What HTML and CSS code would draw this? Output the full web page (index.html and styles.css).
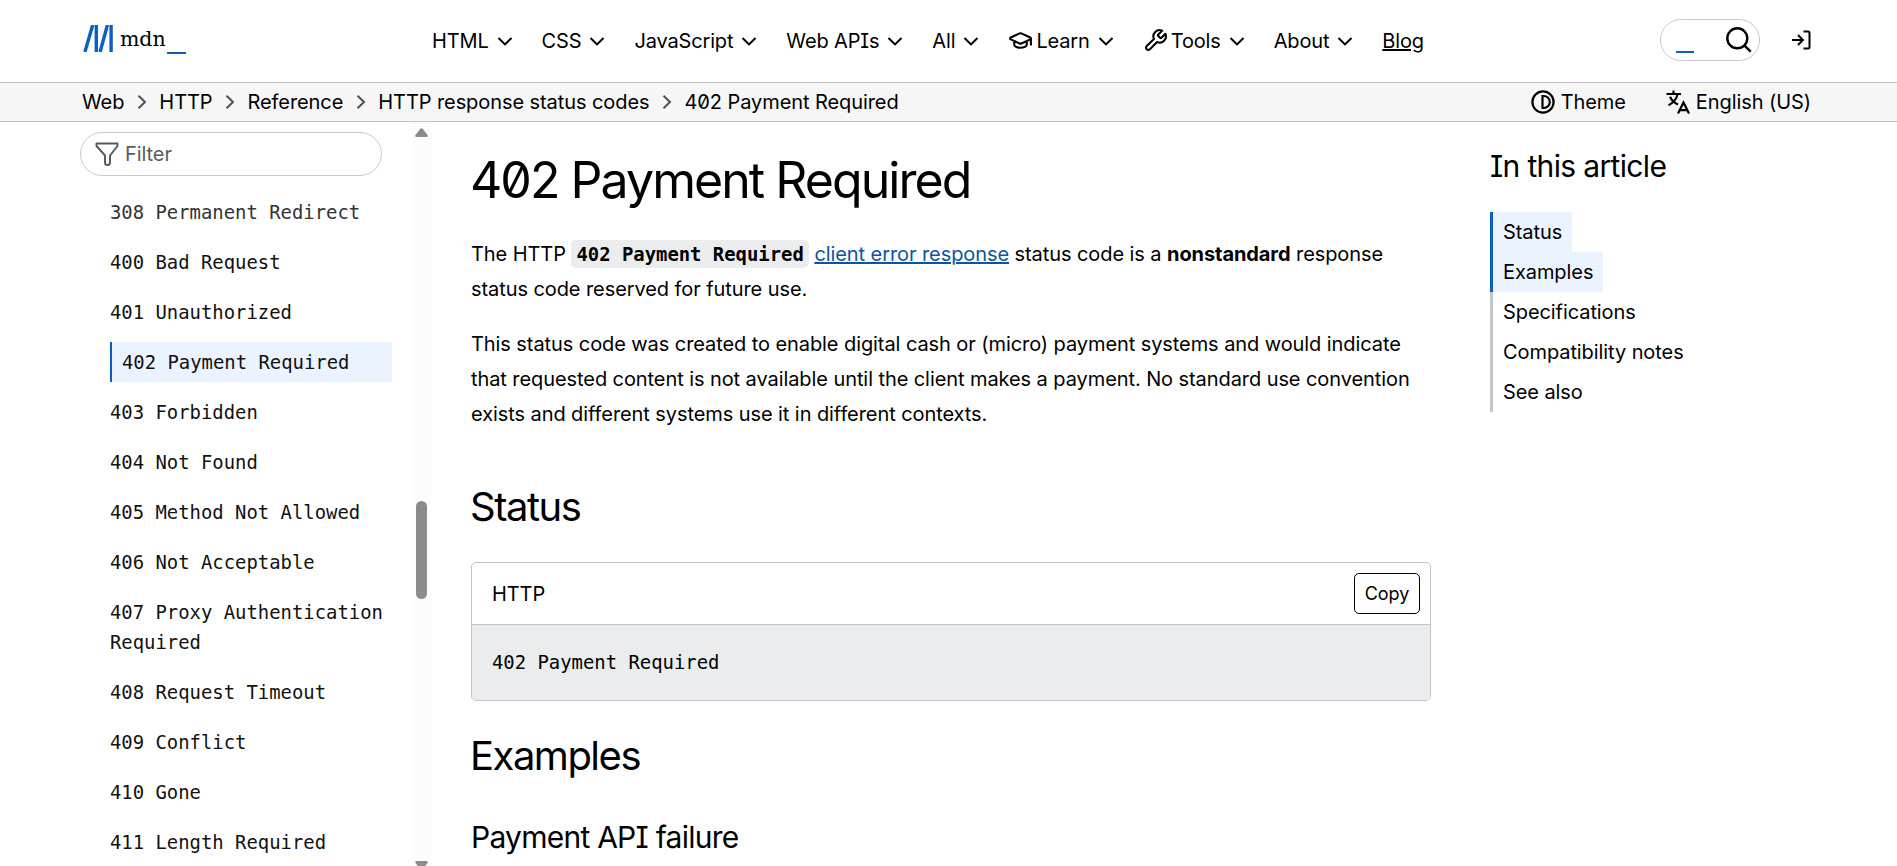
FILE: index.html
```
<!DOCTYPE html>
<html lang="en-US">
<head>
    <meta charset="UTF-8">
    <meta name="viewport" content="width=device-width, initial-scale=1.0">
    <title>402 Payment Required - HTTP | MDN</title>
    <link rel="stylesheet" href="styles.css">
</head>
<body>
    <svg class="sprite" width="0" height="0">
        <symbol id="down" viewBox="0 0 20 20"><path d="M3.5 7 10 13.4 16.5 7"/></symbol>
        <symbol id="right" viewBox="0 0 20 20"><path d="M6.5 3.8 13 10 6.5 16.2"/></symbol>
    </svg>

    <header class="header">
        <a class="logo">
            <svg class="logo-mark" viewBox="0 0 30 27">
                <path d="M1.900 27 9.700 0M13.300 0V27M17.100 27 24.400 0M28.100 0V27"/>
            </svg>
            <span class="logo-text">mdn</span>
            <span class="logo-line"></span>
        </a>
        <nav class="menu">
            <a>HTML <svg class="icon"><use href="#down"/></svg></a>
            <a>CSS <svg class="icon"><use href="#down"/></svg></a>
            <a>JavaScript <svg class="icon"><use href="#down"/></svg></a>
            <a>Web APIs <svg class="icon"><use href="#down"/></svg></a>
            <a>All <svg class="icon"><use href="#down"/></svg></a>
            <a>
                <svg class="menu-icon" viewBox="0 0 24 24">
                    <path d="M21.42 10.92a1 1 0 0 0-.02-1.84L12.83 5.18a2 2 0 0 0-1.66 0L2.6 9.08a1 1 0 0 0 0 1.83l8.57 3.91a2 2 0 0 0 1.66 0zM22 10v6M6 12.5V16a6 3 0 0 0 12 0v-3.5"/>
                </svg>Learn <svg class="icon"><use href="#down"/></svg>
            </a>
            <a>
                <svg class="menu-icon" viewBox="0 0 24 24">
                    <path d="M14.7 6.3a1 1 0 0 0 0 1.4l1.6 1.6a1 1 0 0 0 1.4 0l3.77-3.77a6 6 0 0 1-7.94 7.94l-6.91 6.91a2.12 2.12 0 0 1-3-3l6.91-6.91a6 6 0 0 1 7.94-7.94l-3.76 3.76z"/>
                </svg>Tools <svg class="icon"><use href="#down"/></svg>
            </a>
            <a>About <svg class="icon"><use href="#down"/></svg></a>
            <a class="blog">Blog</a>
        </nav>
        <div class="search">
            <span class="search-line"></span>
            <svg class="search-icon" viewBox="0 0 26 26"><circle cx="11.3" cy="11.3" r="10"/><path d="m18.3 18.3 6.4 6.4"/></svg>
        </div>
        <svg class="login" viewBox="0 0 20 20"><path d="M1 10h11M7 5l5 5-5 5M12.5 1.5h4.5a1.5 1.5 0 0 1 1.5 1.5v14a1.5 1.5 0 0 1-1.5 1.5h-4.5"/></svg>
    </header>

    <div class="topbar">
        <nav class="breadcrumbs">
            <a>Web</a><svg class="icon"><use href="#right"/></svg>
            <a>HTTP</a><svg class="icon"><use href="#right"/></svg>
            <a>Reference</a><svg class="icon"><use href="#right"/></svg>
            <a>HTTP response status codes</a><svg class="icon"><use href="#right"/></svg>
            <a>402 Payment Required</a>
        </nav>
        <div class="settings">
            <a>
                <svg class="theme-icon" viewBox="0 0 24 24"><circle cx="12" cy="12" r="10.6"/><path d="M11.5 6v12h1.3a6 6 0 0 0 0-12z"/></svg>
                Theme
            </a>
            <a>
                <svg class="lang-icon" viewBox="0 0 24 24"><path d="M.5 4h14.500M7.5.5V4M4 6.800C5.500 10 8.500 13 12 14.500M11.500 5C10 9.500 7 13 2.500 15.200M12 23.500 17.500 12.500 23 23.500M14 20.200h7"/></svg>
                English (US)
            </a>
        </div>
    </div>

    <div class="page">
        <aside class="sidebar">
            <div class="sidebar-body">
                <div class="filter">
                    <svg class="filter-icon" viewBox="0 0 24 24"><path d="M1.500 1.500h21v2.500L15 13.500V20.500a2.500 2.500 0 0 1-5 0V13.500L1.500 4z"/></svg>
                    <span>Filter</span>
                </div>
                <ul class="codes">
                    <li class="faded">308 Permanent Redirect</li>
                    <li>400 Bad Request</li>
                    <li>401 Unauthorized</li>
                    <li class="current">402 Payment Required</li>
                    <li>403 Forbidden</li>
                    <li>404 Not Found</li>
                    <li>405 Method Not Allowed</li>
                    <li>406 Not Acceptable</li>
                    <li>407 Proxy Authentication Required</li>
                    <li>408 Request Timeout</li>
                    <li>409 Conflict</li>
                    <li>410 Gone</li>
                    <li>411 Length Required</li>
                </ul>
            </div>
            <div class="scrollbar">
                <svg class="arrow" viewBox="0 0 13 9"><path d="M5.300.8Q6.500-.5 7.700.8L12.500 7Q13.300 9 11.500 9h-10Q-.3 9 .5 7z"/></svg>
                <div class="thumb"></div>
                <svg class="arrow arrow-down" viewBox="0 0 13 9"><path d="M5.300.8Q6.500-.5 7.700.8L12.500 7Q13.300 9 11.500 9h-10Q-.3 9 .5 7z"/></svg>
            </div>
        </aside>

        <main class="content">
            <h1>402 Payment Required</h1>
            <p>The HTTP <code>402 Payment Required</code> <a class="link">client error response</a> status code is a <strong>nonstandard</strong> response status code reserved for future use.</p>
            <p>This status code was created to enable digital cash or (micro) payment systems and would indicate that requested content is not available until the client makes a payment. No standard use convention exists and different systems use it in different contexts.</p>
            <h2>Status</h2>
            <div class="example">
                <div class="example-header">
                    <span>HTTP</span>
                    <button>Copy</button>
                </div>
                <pre>402 Payment Required</pre>
            </div>
            <h2 class="examples">Examples</h2>
            <h3>Payment API failure</h3>
        </main>

        <aside class="toc">
            <h2>In this article</h2>
            <ul>
                <li class="active"><a>Status</a></li>
                <li class="active"><a>Examples</a></li>
                <li><a>Specifications</a></li>
                <li><a>Compatibility notes</a></li>
                <li><a>See also</a></li>
            </ul>
        </aside>
    </div>
</body>
</html>
```
FILE: styles.css
```
* {
    box-sizing: border-box;
}

body {
    margin: 0;
    height: 100vh;
    overflow: hidden;
    display: flex;
    flex-direction: column;
    font-family: Inter, sans-serif;
    font-size: 20px;
    letter-spacing: -0.08px;
    font-feature-settings: "cv08", "zero";
    color: #000;
    background-color: #fff;
}

ul {
    list-style: none;
    margin: 0;
    padding: 0;
}

svg {
    fill: none;
    stroke: currentColor;
    flex-shrink: 0;
}

.sprite {
    position: absolute;
}

.icon {
    width: 20px;
    height: 20px;
    stroke-width: 2;
}

/* header */
.header {
    height: 83px;
    flex-shrink: 0;
    display: flex;
    align-items: center;
    padding: 0 86px 1px 83px;
    border-bottom: 1px solid #c1c2c9;
}

.logo {
    display: flex;
    width: 349px;
    height: 30px;
    margin-top: -1px;
}

.logo-mark {
    width: 30px;
    height: 27px;
    color: #0b5fc0;
    stroke-width: 3.4;
}

.logo-text {
    margin-left: 7px;
    font-family: "DejaVu Serif", serif;
    font-size: 20.5px;
    line-height: 28px;
}

.logo-line {
    width: 19px;
    height: 2px;
    margin: 27px 0 0 1px;
    background-color: #0b5fc0;
}

.menu {
    display: flex;
    gap: 27px;
    letter-spacing: -0.15px;
}

.menu a {
    display: flex;
    align-items: center;
    white-space: nowrap;
}

.menu .icon {
    margin-left: 6px;
}

.menu-icon {
    width: 25px;
    height: 25px;
    margin-right: 3px;
    stroke-width: 2;
    stroke-linecap: round;
    stroke-linejoin: round;
}

.menu .blog {
    text-decoration: underline;
}

.search {
    width: 100px;
    height: 42px;
    margin: -1px 0 0 auto;
    display: flex;
    align-items: center;
    justify-content: space-between;
    padding: 0 7px 0 15px;
    border: 1px solid #c7c9ce;
    border-radius: 21px;
}

.search-line {
    width: 18px;
    height: 2px;
    margin-top: 23px;
    background-color: #0b5fc0;
}

.search-icon {
    width: 26px;
    height: 26px;
    stroke-width: 2.4;
}

.login {
    width: 20px;
    height: 20px;
    margin: -1px 0 0 31px;
    stroke-width: 2;
}

/* breadcrumbs bar */
.topbar {
    height: 39px;
    flex-shrink: 0;
    display: flex;
    justify-content: space-between;
    align-items: center;
    padding: 0 86px 0 82px;
    background-color: #f6f6f6;
    border-bottom: 1px solid #c1c2c9;
}

.breadcrumbs {
    display: flex;
    align-items: center;
    gap: 7.5px;
}

.breadcrumbs .icon {
    color: #4e5058;
}

.settings {
    display: flex;
    gap: 40px;
}

.settings a {
    display: flex;
    align-items: center;
    gap: 6px;
}

.theme-icon,
.lang-icon {
    width: 24px;
    height: 24px;
    stroke-width: 2.2;
}

/* columns */
.page {
    flex: 1;
    min-height: 0;
    display: flex;
}

.sidebar {
    width: 431px;
    flex-shrink: 0;
    display: flex;
    justify-content: space-between;
    padding-left: 80px;
    overflow: hidden;
}

.sidebar-body {
    width: 312px;
    padding-top: 10px;
}

.filter {
    width: 302px;
    height: 44px;
    display: flex;
    align-items: center;
    gap: 6px;
    padding-left: 14px;
    color: #595b63;
    border: 1px solid #c7c9ce;
    border-radius: 22px;
}

.filter-icon {
    width: 24px;
    height: 24px;
    stroke-width: 2;
    stroke-linejoin: round;
}

.codes {
    display: flex;
    flex-direction: column;
    gap: 10px;
    margin: 16px 0 0 30px;
    font-family: "DejaVu Sans Mono", monospace;
    font-size: 18.9px;
    letter-spacing: 0;
    line-height: 30px;
    color: #111;
}

.codes li {
    padding: 5px 0;
}

.codes .faded {
    color: #333;
}

.codes .current {
    padding-left: 10px;
    background-color: #ebf3fe;
    border-left: 2px solid #0b5fc0;
}

.scrollbar {
    width: 19px;
    height: 100%;
    display: flex;
    flex-direction: column;
    align-items: center;
    justify-content: space-between;
    padding-top: 6px;
    background-color: #fcfcfc;
}

.arrow {
    width: 13px;
    height: 9px;
    fill: #8b8b8b;
    stroke: none;
}

.arrow-down {
    transform: rotate(180deg);
    margin-bottom: -4px;
}

.thumb {
    width: 11px;
    height: 98px;
    margin-top: 102px;
    border-radius: 6px;
    background-color: #8b8b8b;
}

.content {
    width: 960px;
    margin-left: 40px;
    flex-shrink: 0;
}

h1, h2, h3 {
    margin: 0;
    font-weight: 400;
}

h1 {
    margin-top: 28px;
    font-size: 50px;
    line-height: 60px;
    letter-spacing: -1.95px;
    text-indent: -1px;
}

p {
    margin: 0 0 20px;
    line-height: 35px;
}

h1 + p {
    margin-top: 27px;
}

p code {
    padding: 3px 5px;
    font-family: "DejaVu Sans Mono", monospace;
    font-size: 18.9px;
    letter-spacing: 0;
    font-weight: 700;
    background-color: #ebecee;
    border-radius: 5px;
}

.link {
    color: #0b54a5;
    text-decoration: underline;
}

.content h2 {
    margin-top: 50px;
    font-size: 40px;
    line-height: 50px;
    letter-spacing: -1.5px;
    text-indent: -1px;
}

.example {
    margin-top: 30px;
    border: 1px solid #c1c4cb;
    border-radius: 5px;
    overflow: hidden;
}

.example-header {
    height: 62px;
    display: flex;
    align-items: center;
    justify-content: space-between;
    padding: 0 10px 0 20px;
    border-bottom: 1px solid #c1c4cb;
}

.example-header button {
    width: 66px;
    height: 41px;
    padding: 0;
    font: inherit;
    font-size: 18px;
    color: #000;
    background-color: #fff;
    border: 1px solid #000;
    border-radius: 5px;
}

.example pre {
    margin: 0;
    padding: 20px;
    font-family: "DejaVu Sans Mono", monospace;
    font-size: 18.9px;
    letter-spacing: 0;
    line-height: 35px;
    background-color: #ebecee;
}

.content .examples {
    margin-top: 30px;
}

h3 {
    margin-top: 38px;
    font-size: 30px;
    line-height: 36px;
    letter-spacing: -0.75px;
}

.toc {
    margin-left: 59px;
    padding-top: 26px;
}

.toc h2 {
    font-size: 30px;
    line-height: 36px;
    letter-spacing: -0.65px;
}

.toc ul {
    margin-top: 28px;
}

.toc li {
    height: 40px;
    line-height: 40px;
    border-left: 3px solid #c2c7cb;
}

.toc a {
    display: inline-block;
    padding: 0 10px;
}

.toc .active {
    border-color: #0b5fc0;
}

.toc .active a {
    background-color: #ebf3fe;
}
```
